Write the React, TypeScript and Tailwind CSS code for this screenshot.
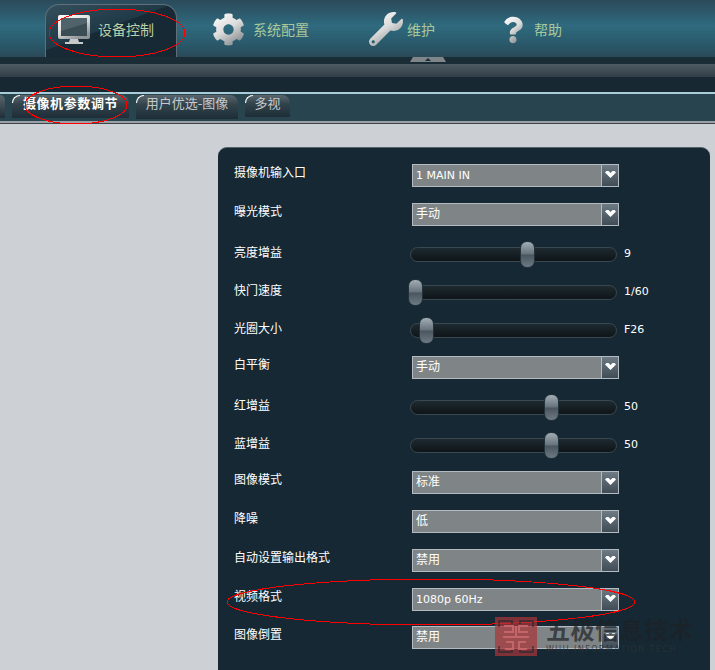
import { FaCog, FaQuestion, FaWrench } from 'react-icons/fa'

const uiFont = "font-['DejaVu_Sans','Noto_Sans_CJK_SC',sans-serif]"

type Row =
  | { label: string; h: string; kind: 'select'; value: string; size: string }
  | { label: string; h: string; kind: 'slider'; value: string; thumb: number }

const rows: Row[] = [
  { label: '摄像机输入口', h: 'h-[39px]', kind: 'select', value: '1 MAIN IN', size: 'text-[11px]' },
  { label: '曝光模式', h: 'h-[39px]', kind: 'select', value: '手动', size: 'text-[12px]' },
  { label: '亮度增益', h: 'h-[38px]', kind: 'slider', value: '9', thumb: 109 },
  { label: '快门速度', h: 'h-[38px]', kind: 'slider', value: '1/60', thumb: -3 },
  { label: '光圈大小', h: 'h-[38px]', kind: 'slider', value: 'F26', thumb: 8 },
  { label: '白平衡', h: 'h-[39px]', kind: 'select', value: '手动', size: 'text-[12px]' },
  { label: '红增益', h: 'h-[38px]', kind: 'slider', value: '50', thumb: 133 },
  { label: '蓝增益', h: 'h-[38px]', kind: 'slider', value: '50', thumb: 133 },
  { label: '图像模式', h: 'h-[39px]', kind: 'select', value: '标准', size: 'text-[12px]' },
  { label: '降噪', h: 'h-[39px]', kind: 'select', value: '低', size: 'text-[12px]' },
  { label: '自动设置输出格式', h: 'h-[39px]', kind: 'select', value: '禁用', size: 'text-[12px]' },
  { label: '视频格式', h: 'h-[38px]', kind: 'select', value: '1080p 60Hz', size: 'text-[11px]' },
  { label: '图像倒置', h: 'h-[39px]', kind: 'select', value: '禁用', size: 'text-[12px]' },
]

function Select({ value, size }: { value: string; size: string }) {
  return (
    <div className="flex h-[23px] w-[207px] border border-[#b4bac2] bg-[#7f8586]">
      <div className={`flex-1 pl-[3px] leading-[21px] text-white ${size}`}>{value}</div>
      <div className="flex w-[17px] items-start justify-center border-l border-[#b4bac2] bg-gradient-to-b from-[#6f7b84] to-[#404c56] pt-[6px]">
        <svg viewBox="0 0 11 7" className="h-[7px] w-[11px]" fill="#ffffff">
          <path d="M0 1.5 1.5 0 3.5 0 5.5 2 7.5 0 9.5 0 11 1.5 5.5 7z" />
        </svg>
      </div>
    </div>
  )
}

function Slider({ value, thumb }: { value: string; thumb: number }) {
  return (
    <div className="flex items-center">
      <div className="relative -ml-[2px] h-[15px] w-[207px] rounded-full border border-[#3a4850] bg-gradient-to-b from-[#1d2a30] to-[#0f1518]">
        <div
          className="absolute -top-[7px] h-[27px] w-[15px] rounded-[7px] border border-[#22323b] bg-[linear-gradient(#a3adb5,#66727c_48%,#4a555e_52%,#6d7984)]"
          style={{ left: thumb }}
        />
      </div>
      <span className="ml-[7px] text-[11px] text-white">{value}</span>
    </div>
  )
}

function Tab({ label, active, w, h }: { label: string; active?: boolean; w: string; h: string }) {
  return (
    <div
      className={`relative flex items-start justify-center rounded-t-[8px] bg-[linear-gradient(#5a666c,#33434c_40%,#1e2e38)] text-[13px] leading-[18px] ${w} ${h} ${active ? 'font-bold tracking-[0.6px] text-white' : 'text-[#c3c9cc]'}`}
    >
      <div className="absolute top-0 left-0 h-[8px] w-[8px] rounded-tl-[8px] border-t border-l border-white" />
      {label}
    </div>
  )
}

export default function App() {
  return (
    <div className={`relative h-[670px] w-[715px] overflow-hidden bg-[#cdd0d5] ${uiFont}`}>
      <svg className="absolute h-0 w-0">
        <defs>
          <linearGradient id="metal" x1="0" y1="0" x2="0.6" y2="1">
            <stop offset="0" stopColor="#ffffff" />
            <stop offset="0.55" stopColor="#dcdcdc" />
            <stop offset="1" stopColor="#8f9497" />
          </linearGradient>
        </defs>
      </svg>

      {/* 上部ナビ */}
      <header className="flex h-[57px] items-end bg-[linear-gradient(#2b4a5a,#2f6a7e_45%,#2a5a6c_75%,#2a4a58)] pl-[45px]">
        <div className="relative flex h-[53px] w-[132px] rounded-t-[14px] border border-b-0 border-[#5f7078] bg-[linear-gradient(160deg,#35505c_0%,#1f3a46_45%,#172a35_46%,#172833)] pt-[10px] pl-[12px]">
          <svg viewBox="0 0 32 30" className="h-[30px] w-[32px]">
            <rect x="0" y="0" width="32" height="24" rx="2" fill="url(#metal)" />
            <rect x="3" y="3" width="26" height="18" fill="#3a4d55" />
            <path d="M3 3h26v5L3 16z" fill="#51636a" />
            <path d="M12 24h8l1 3h4v2H7v-2h4z" fill="#c7c9ca" />
          </svg>
          <span className="ml-[8px] pt-[6px] text-[14px] leading-[18px] text-[#b9d0a8]">设备控制</span>
        </div>
        <div className="flex h-[53px] items-start pt-[9px]">
          <FaCog className="ml-[35px] h-[33px] w-[33px] fill-[url(#metal)]" />
          <span className="ml-[8px] pt-[8px] text-[14px] leading-[18px] text-[#a9c99b]">系统配置</span>
        </div>
        <div className="flex h-[53px] items-start pt-[8px]">
          <FaWrench className="ml-[60px] h-[34px] w-[34px] fill-[url(#metal)]" />
          <span className="ml-[4px] pt-[9px] text-[14px] leading-[18px] text-[#a9c99b]">维护</span>
        </div>
        <div className="flex h-[53px] items-start pt-[10px]">
          <FaQuestion className="ml-[68px] h-[32px] w-[20px] fill-[url(#metal)]" />
          <span className="ml-[11px] pt-[7px] text-[14px] leading-[18px] text-[#a9c99b]">帮助</span>
        </div>
      </header>

      {/* 折りたたみバー */}
      <div className="flex h-[7px] justify-start bg-[#1a2c36] pl-[410px]">
        <div className="flex h-[5px] w-[36px] items-center justify-center bg-[#7f868a] [clip-path:polygon(3px_0,33px_0,36px_100%,0_100%)]">
          <div className="h-0 w-0 border-x-[3px] border-b-[3px] border-x-transparent border-b-[#1a2c36]" />
        </div>
      </div>
      <div className="h-[13px] bg-gradient-to-b from-[#4f5b63] to-[#323e47]" />
      <div className="h-[15px] bg-[#182832]" />
      <div className="h-[2px] bg-[#a9cdd8]" />

      {/* サブタブ */}
      <nav className="flex h-[27px] items-start gap-[7px] bg-[#27444f] pt-[1px]">
        <div className="h-[23px] w-[5px] rounded-tr-[6px] bg-[linear-gradient(#5a666c,#1e2e38)]" />
        <Tab label="摄像机参数调节" active w="w-[117px]" h="h-[23px]" />
        <Tab label="用户优选-图像" w="w-[102px]" h="h-[24px]" />
        <Tab label="多视" w="w-[45px]" h="h-[22px]" />
      </nav>
      <div className="h-[2px] bg-[#9aa0a5]" />
      <div className="h-[1px] bg-[#3d454b]" />

      {/* パネル */}
      <main className="pt-[23px] pl-[218px]">
        <section className="h-[540px] w-[492px] rounded-[9px] border-t border-[#55636b] bg-[#162833] pt-[16px] pl-[16px]">
          {rows.map((row) => (
            <div key={row.label} className={`flex items-start ${row.h}`}>
              <div
                className={`w-[178px] text-[12px] leading-[18px] text-white ${row.kind === 'slider' ? 'pt-[2px]' : ''}`}
              >
                {row.label}
              </div>
              {row.kind === 'select' ? (
                <Select value={row.value} size={row.size} />
              ) : (
                <div className="pt-[4px]">
                  <Slider value={row.value} thumb={row.thumb} />
                </div>
              )}
            </div>
          ))}
        </section>
      </main>

      {/* 赤い注釈の楕円 */}
      <svg
        className="pointer-events-none absolute inset-0"
        width="715"
        height="670"
        fill="none"
        stroke="#ff0000"
        shapeRendering="crispEdges"
      >
        <ellipse cx="117" cy="33" rx="68" ry="24" />
        <ellipse cx="76" cy="105" rx="51" ry="19" />
        <ellipse cx="431" cy="602" rx="204" ry="23" />
      </svg>

      {/* 透かし */}
      <div className="pointer-events-none absolute top-[617px] left-[495px] flex">
        <svg viewBox="0 0 42 39" className="h-[39px] w-[42px]">
          <rect width="42" height="39" fill="#a8343a" opacity="0.72" />
          <g fill="none" stroke="#1b2a33" strokeWidth="1.5" opacity="0.75">
            <path d="M4 10V4h13v3M38 10V4H25v3M4 29v6h13v-3M38 29v6H25v-3" />
          </g>
          <g fill="none" stroke="#c9686c" strokeWidth="2" opacity="0.9">
            <path d="M9 9h9v6H9M33 9h-9v6h9M8 20h26M11 25h7v7h-8M31 25h-7v7h8M21 9v11" />
          </g>
        </svg>
        <div className="ml-[9px] flex flex-col">
          <span className="pt-[1px] text-[24px] leading-[27px] font-bold tracking-[0.5px] text-[#1c2226]/70">五极信息技术</span>
          <span className="text-[8px] leading-[9px] tracking-[1.4px] whitespace-nowrap text-[#2a3236]/80">WUJI INFORMATION TECH</span>
        </div>
      </div>
    </div>
  )
}
